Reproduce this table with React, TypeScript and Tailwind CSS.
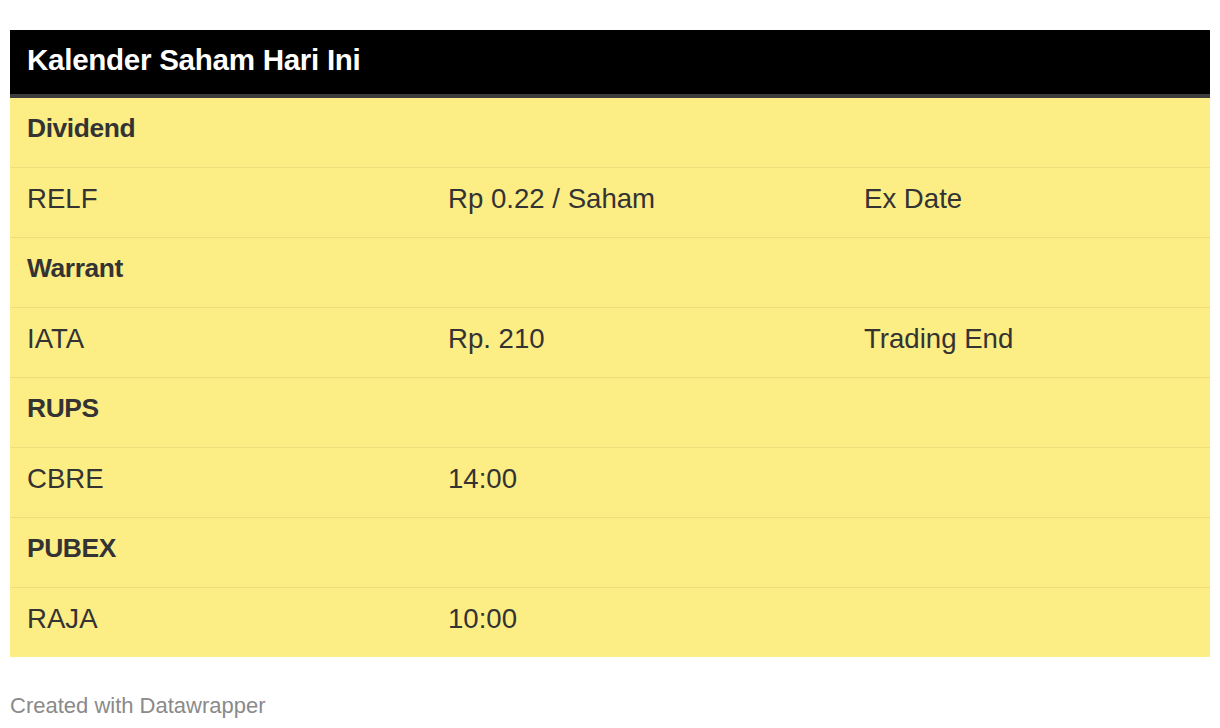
const rows: { label?: string; cells?: string[] }[] = [
  { label: "Dividend" },
  { cells: ["RELF", "Rp 0.22 / Saham", "Ex Date"] },
  { label: "Warrant" },
  { cells: ["IATA", "Rp. 210", "Trading End"] },
  { label: "RUPS" },
  { cells: ["CBRE", "14:00", ""] },
  { label: "PUBEX" },
  { cells: ["RAJA", "10:00", ""] },
];

export default function App() {
  return (
    <div
      className="min-h-[728px] bg-white px-[10px] pt-[30px]"
      style={{ fontFamily: '"Liberation Sans", Arial, sans-serif' }}
    >
      <div className="w-[1200px]">
        <div className="border-b-4 border-[#3c3c3c] bg-black pl-[17px] pt-[12px] pb-[16px]">
          <h1 className="text-[29.6px] font-bold leading-[36px] tracking-[-0.3px] text-white">
            Kalender Saham Hari Ini
          </h1>
        </div>
        <div className="bg-[#fded85] text-[#333333]">
          {rows.map((row, i) => (
            <div
              key={i}
              className={
                "grid grid-cols-[421px_416px_363px] " +
                (i < rows.length - 1 ? "border-b border-[#efdd7c]" : "")
              }
            >
              {row.label ? (
                <div className="col-span-3 pl-[17px] pt-[14px] pb-[23px] text-[26.4px] font-bold leading-[32px] tracking-[-0.4px]">
                  {row.label}
                </div>
              ) : (
                row.cells!.map((c, j) => (
                  <div
                    key={j}
                    className="pl-[17px] pt-[15px] pb-[22px] text-[27.6px] leading-[32px]"
                  >
                    {c}
                  </div>
                ))
              )}
            </div>
          ))}
        </div>
        <p className="mt-[36px] text-[22px] leading-[26px] text-[#8a8a8a]">
          Created with Datawrapper
        </p>
      </div>
    </div>
  );
}
